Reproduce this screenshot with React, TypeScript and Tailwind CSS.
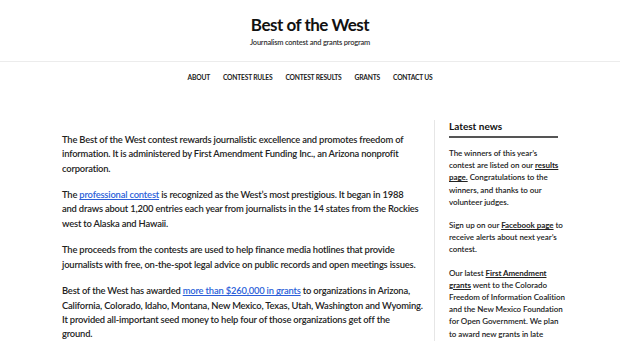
import * as React from 'react';

const navItems = ['About', 'Contest rules', 'Contest results', 'Grants', 'Contact us'];

function Header() {
	return (
		<header className="border-b border-[#ececec]">
			<div className="flex flex-col items-center pt-[14px] pb-[13px]">
				<h1 className="text-[17px] leading-[22px] font-bold text-[#111] tracking-[-0.5px]">Best of the West</h1>
				<p className="mt-[2px] text-[7.5px] leading-[10px] font-semibold text-[#333] tracking-[-0.22px]">
					Journalism contest and grants program
				</p>
			</div>
		</header>
	);
}

function Nav() {
	return (
		<nav className="flex justify-center gap-[13px] pt-[10px] pb-[10px]">
			{navItems.map((item) => (
				<a key={item} href="#" className="text-[6.7px] leading-[10px] font-bold uppercase text-[#222] tracking-[-0.2px]">
					{item}
				</a>
			))}
		</nav>
	);
}

export default function App() {
	return (
		<div className="min-h-[343px] bg-white font-['Lato',sans-serif] overflow-hidden">
			<Header />
			<Nav />

			<div className="flex pl-[62px] pt-[28px]">
				{/* Main content */}
				<main className="w-[366px] shrink-0 pt-[13px] space-y-[12.3px] text-[9.4px] leading-[14.3px] font-semibold text-[#222] tracking-[-0.18px] whitespace-nowrap">
					<p>
						The Best of the West contest rewards journalistic excellence and promotes freedom of
						<br />
						information. It is administered by First Amendment Funding Inc., an Arizona nonprofit
						<br />
						corporation.
					</p>
					<p>
						The <a href="#" className="text-[#2b5fd9] underline">professional contest</a> is recognized as the West’s
						most prestigious. It began in 1988
						<br />
						and draws about 1,200 entries each year from journalists in the 14 states from the Rockies
						<br />
						west to Alaska and Hawaii.
					</p>
					<p>
						The proceeds from the contests are used to help finance media hotlines that provide
						<br />
						journalists with free, on-the-spot legal advice on public records and open meetings issues.
					</p>
					<p>
						Best of the West has awarded <a href="#" className="text-[#2b5fd9] underline">more than $260,000 in grants</a> to
						organizations in Arizona,
						<br />
						California, Colorado, Idaho, Montana, New Mexico, Texas, Utah, Washington and Wyoming.
						<br />
						It provided all-important seed money to help four of those organizations get off the
						<br />
						ground.
					</p>
				</main>

				{/* Sidebar */}
				<aside className="ml-[6px] border-l border-[#e6e6e6] pl-[14px] w-[128px] shrink-0">
					<h2 className="text-[10px] leading-[12px] font-bold text-[#111] pb-[4px] border-b-2 border-[#555] w-[109px]">
						Latest news
					</h2>
					<div className="mt-[9px] w-[114px] space-y-[11px] text-[8px] leading-[12.2px] font-semibold text-[#222] tracking-[-0.05px]">
						<p>
							The winners of this year’s
							<br />
							contest are listed on our <a href="#" className="font-bold underline">results</a>
							<br />
							<a href="#" className="font-bold underline">page.</a> Congratulations to the
							<br />
							winners, and thanks to our
							<br />
							volunteer judges.
						</p>
						<p>
							Sign up on our <a href="#" className="font-bold underline">Facebook page</a> to
							<br />
							receive alerts about next year’s
							<br />
							contest.
						</p>
						<p>
							Our latest <a href="#" className="font-bold underline">First Amendment</a>
							<br />
							<a href="#" className="font-bold underline">grants</a> went to the Colorado
							<br />
							<span className="whitespace-nowrap">Freedom of Information Coalition</span>
							<br />
							and the New Mexico Foundation
							<br />
							for Open Government. We plan
							<br />
							to award new grants in late
						</p>
					</div>
				</aside>
			</div>
		</div>
	);
}
